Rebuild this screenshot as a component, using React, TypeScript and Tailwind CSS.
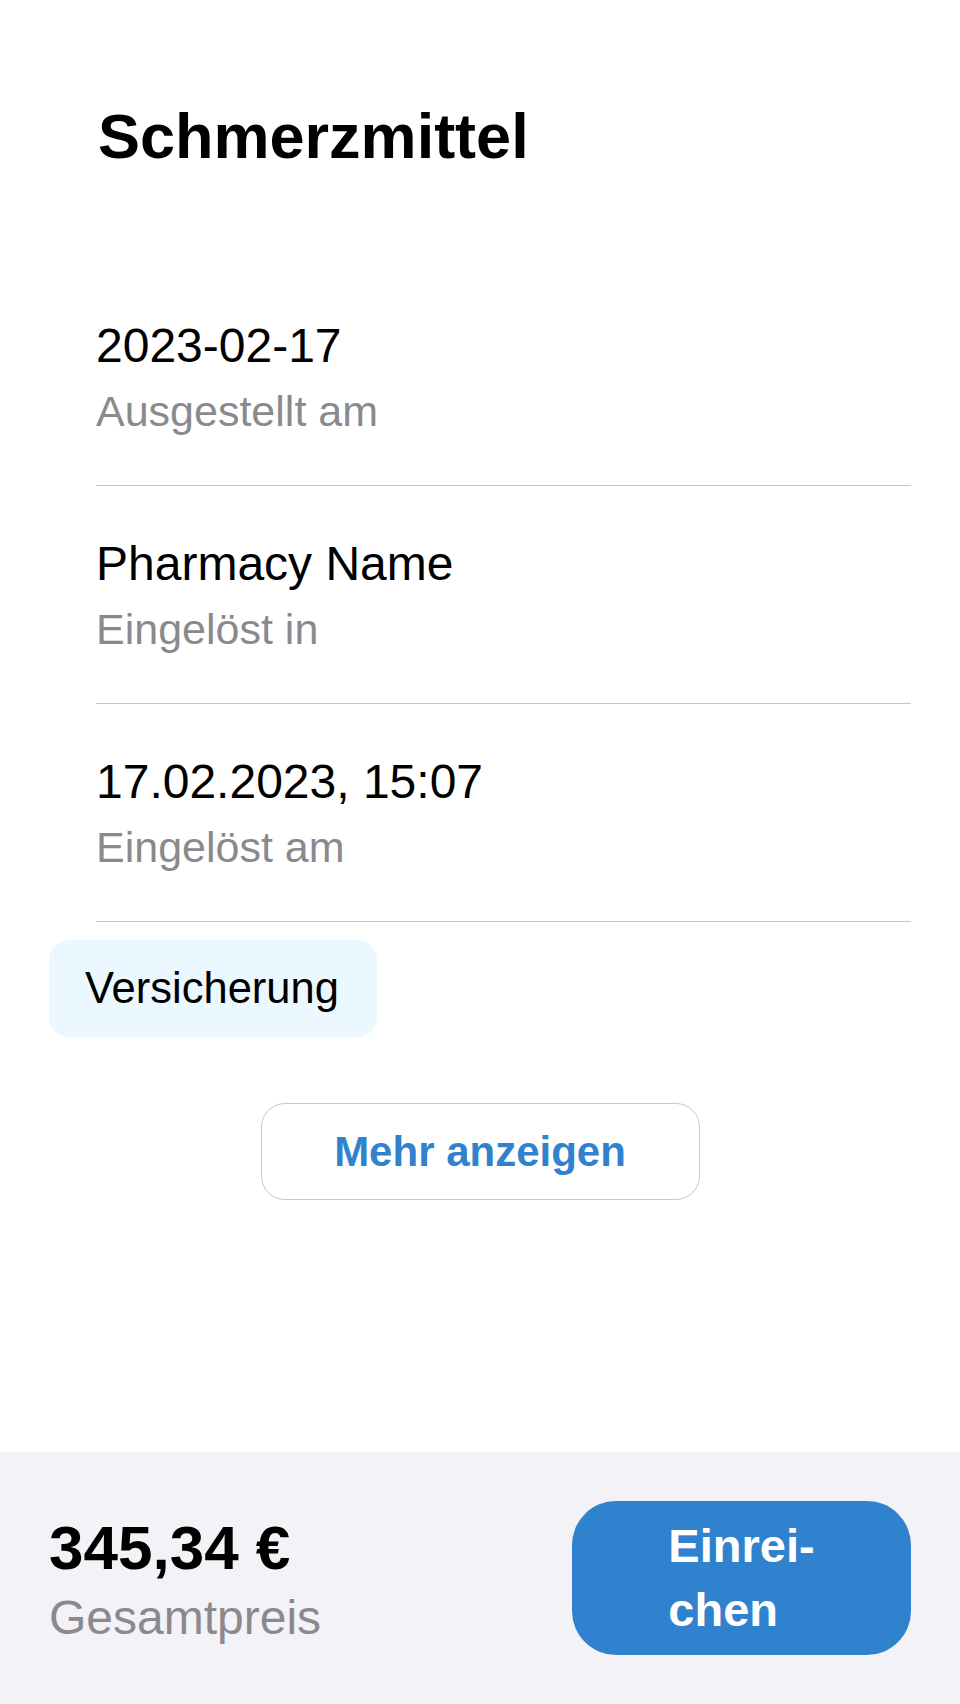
import { useState } from 'react';

const rows = [
    { value: '2023-02-17', label: 'Ausgestellt am' },
    { value: 'Pharmacy Name', label: 'Eingelöst in' },
    { value: '17.02.2023, 15:07', label: 'Eingelöst am' },
];

const InfoRow = ({ value, label }: { value: string; label: string }) => (
    <div className="pt-[49px] pb-[48px] border-b border-[#c6c6c8]">
        <div className="text-[48px] leading-[58px] text-black">{value}</div>
        <div className="mt-[10px] text-[43px] leading-[52px] text-[#8a8a8e]">{label}</div>
    </div>
);

const App = () => {
    const [expanded, setExpanded] = useState(false);

    return (
        <div className="min-h-screen flex flex-col bg-white font-['Liberation_Sans',Arial,sans-serif]">
            <div className="flex-1 px-[49px]">
                <h1 className="pt-[99px] pl-[49px] text-[63px] leading-[74px] font-bold text-black">
                    Schmerzmittel
                </h1>

                <div className="mt-[95px] ml-[47px]">
                    {rows.map((row) => (
                        <InfoRow key={row.label} value={row.value} label={row.label} />
                    ))}
                </div>

                <div className="mt-[18px] inline-flex items-center h-[97px] pl-[36px] pr-[38px] rounded-[20px] bg-[#ebf8ff] text-[43.5px] text-black">
                    Versicherung
                </div>

                <div className="flex justify-center mt-[66px]">
                    <button
                        className="w-[439px] h-[97px] rounded-[24px] border border-[#c8c8cc] bg-white text-[42px] font-bold text-[#3182ce]"
                        onClick={() => setExpanded(!expanded)}
                    >
                        Mehr anzeigen
                    </button>
                </div>
            </div>

            <div className="h-[252px] bg-[#f2f2f7] px-[49px] flex items-center justify-between">
                <div className="pt-[10px]">
                    <div className="text-[62px] leading-[70px] font-bold text-black">345,34 €</div>
                    <div className="text-[48px] leading-[70px] text-[#8a8a8e]">Gesamtpreis</div>
                </div>
                <button className="w-[339px] h-[154px] rounded-[44px] bg-[#3182ce] flex items-center justify-center">
                    <span className="text-left text-[47px] leading-[64px] font-semibold text-white">
                        Einrei-
                        <br />
                        chen
                    </span>
                </button>
            </div>
        </div>
    );
};

export default App;
